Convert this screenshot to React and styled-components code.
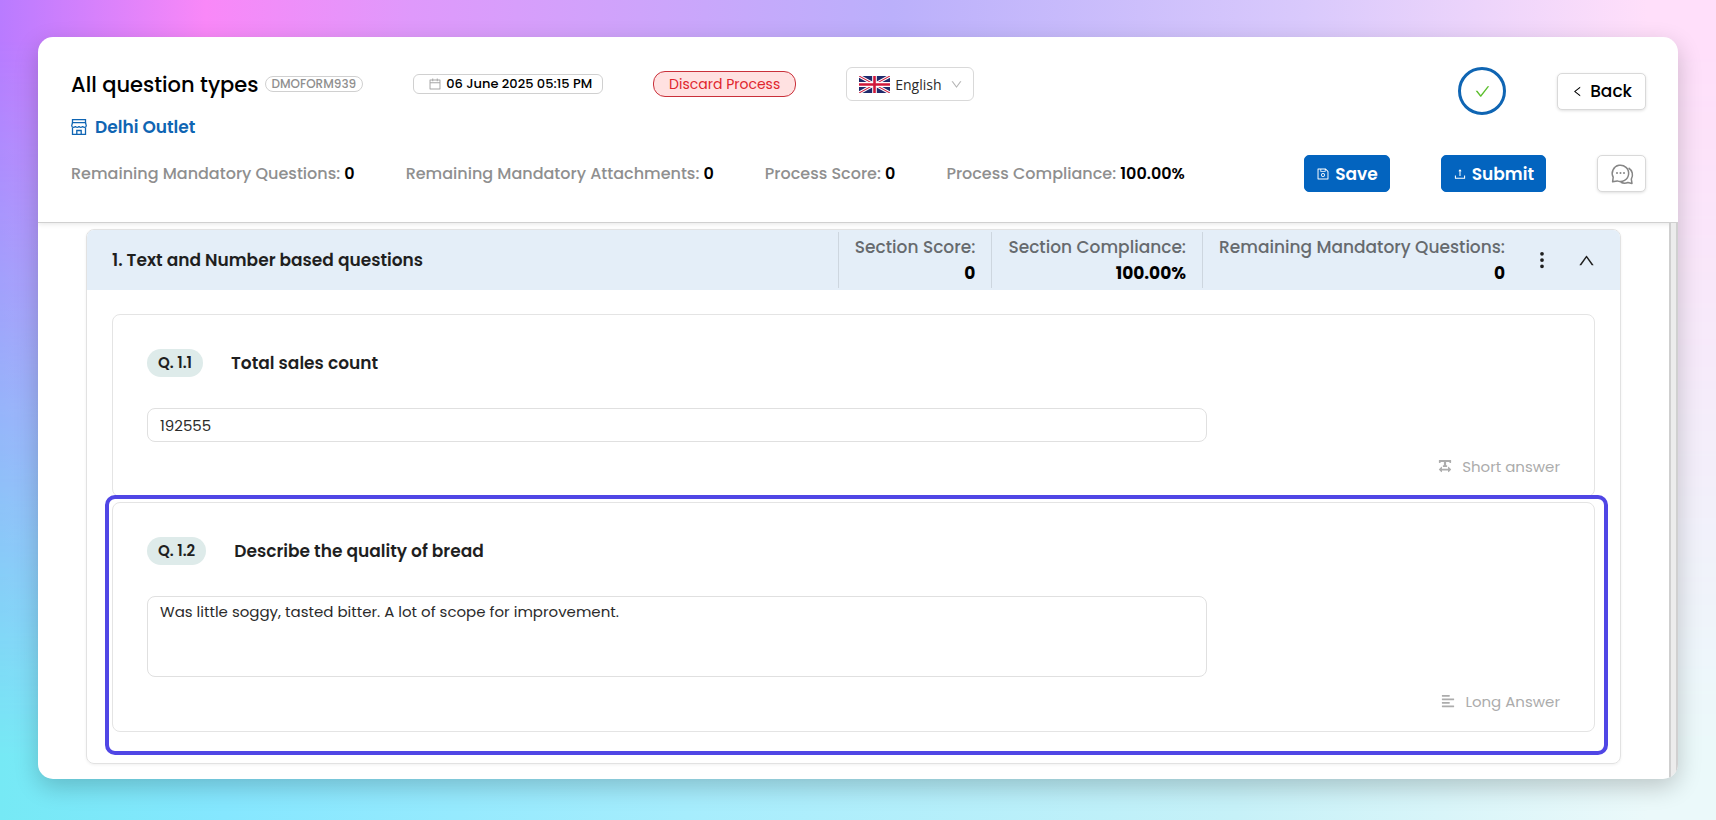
import styled, { createGlobalStyle } from "styled-components";
import {
  AiOutlineCalendar,
  AiOutlineCheck,
  AiOutlineDown,
  AiOutlineLeft,
  AiOutlineSave,
  AiOutlineUp,
  AiOutlineUpload,
} from "react-icons/ai";
import { BsThreeDotsVertical } from "react-icons/bs";
import { FaAlignLeft, FaTextWidth } from "react-icons/fa";

const headerStats = [
  { label: "Remaining Mandatory Questions:", value: "0" },
  { label: "Remaining Mandatory Attachments:", value: "0" },
  { label: "Process Score:", value: "0" },
  { label: "Process Compliance:", value: "100.00%" },
];

const sectionStats = [
  { label: "Section Score:", value: "0" },
  { label: "Section Compliance:", value: "100.00%" },
  { label: "Remaining Mandatory Questions:", value: "0" },
];

function FlagIcon() {
  return (
    <svg width="31" height="17" viewBox="0 0 60 32" preserveAspectRatio="none" aria-hidden="true">
      <rect width="60" height="32" fill="#1f2a6b" />
      <path d="M0 0L60 32M60 0L0 32" stroke="#fff" strokeWidth="6" />
      <path d="M0 0L60 32M60 0L0 32" stroke="#d0183a" strokeWidth="2" />
      <path d="M30 0V32M0 16H60" stroke="#fff" strokeWidth="9" />
      <path d="M30 0V32M0 16H60" stroke="#d0183a" strokeWidth="5" />
    </svg>
  );
}

function ShopIcon() {
  return (
    <svg width="16" height="16" viewBox="0 0 16 16" fill="none" stroke="#0f65b3" strokeWidth="1.3" aria-hidden="true">
      <path d="M1.500 0.700H14.500V3.600H1.500Z" />
      <path d="M1.500 3.600L0.700 6.800C0.700 8.800 4.300 8.800 4.400 7C4.600 8.800 7.900 8.800 8 7C8.100 8.800 11.400 8.800 11.600 7C11.700 8.800 15.300 8.800 15.300 6.800L14.500 3.600" />
      <path d="M1.500 8.500V15.300H14.500V8.500" />
      <path d="M5.800 15.300V11.500H10.200V15.300" />
    </svg>
  );
}

function ChatIcon() {
  return (
    <svg width="24" height="22" viewBox="0 0 24 22" fill="none" stroke="#868686" strokeWidth="1.5" aria-hidden="true">
      <path
        d="M2.600 18.800L3.200 14.200A8.200 8.200 0 1 1 7.200 17.900L2.600 18.800Z"
        strokeLinejoin="round"
      />
      <path d="M18.600 5A8.200 8.200 0 0 1 21.300 16.200L22 20.400L17.900 19.500A9 9 0 0 1 10.800 19.300" strokeLinejoin="round" />
      <g fill="#868686" stroke="none">
        <circle cx="7" cy="10" r="1" />
        <circle cx="10.500" cy="10" r="1" />
        <circle cx="14" cy="10" r="1" />
      </g>
    </svg>
  );
}

function Question({ id, number, title, type, icon, children }) {
  return (
    <QuestionCard>
      <QuestionHead>
        <QuestionNo>{number}</QuestionNo>
        <QuestionTitle htmlFor={id}>{title}</QuestionTitle>
      </QuestionHead>
      {children}
      <AnswerType>
        {icon}
        {type}
      </AnswerType>
    </QuestionCard>
  );
}

function App() {
  return (
    <Page>
      <GlobalStyle />
      <Panel>
        <Header>
          <TopRow>
            <div>
              <TitleRow>
                <TitleGroup>
                  <FormTitle>All question types</FormTitle>
                  <FormCode>DMOFORM939</FormCode>
                </TitleGroup>
                <DateChip>
                  <AiOutlineCalendar size={14} color="#a6a6a6" />
                  06 June 2025 05:15 PM
                </DateChip>
                <DiscardBtn type="button">Discard Process</DiscardBtn>
                <LanguageBox>
                  <FlagIcon />
                  <LanguageSelect aria-label="Language" defaultValue="en">
                    <option value="en">English</option>
                  </LanguageSelect>
                  <AiOutlineDown size={13} color="#b5b5b5" />
                </LanguageBox>
              </TitleRow>
              <Outlet href="#outlet">
                <ShopIcon />
                Delhi Outlet
              </Outlet>
            </div>
            <Actions>
              <Progress>
                <AiOutlineCheck size={17} />
              </Progress>
              <BackBtn type="button">
                <AiOutlineLeft size={13} />
                Back
              </BackBtn>
            </Actions>
          </TopRow>
          <BottomRow>
            <StatList>
              {headerStats.map((stat) => (
                <Stat key={stat.label}>
                  {stat.label} <b>{stat.value}</b>
                </Stat>
              ))}
            </StatList>
            <Actions>
              <PrimaryBtn type="button">
                <AiOutlineSave size={14} />
                Save
              </PrimaryBtn>
              <PrimaryBtn type="button">
                <AiOutlineUpload size={14} />
                Submit
              </PrimaryBtn>
              <ChatBtn type="button" aria-label="Comments">
                <ChatIcon />
              </ChatBtn>
            </Actions>
          </BottomRow>
        </Header>

        <Body>
          <Content>
            <Section>
              <SectionHead>
                <SectionTitle>1. Text and Number based questions</SectionTitle>
                {sectionStats.map((stat) => (
                  <SectionStat key={stat.label}>
                    {stat.label}
                    <b>{stat.value}</b>
                  </SectionStat>
                ))}
                <SectionTools>
                  <IconBtn type="button" aria-label="More options">
                    <BsThreeDotsVertical size={20} />
                  </IconBtn>
                  <IconBtn type="button" aria-label="Collapse section">
                    <AiOutlineUp size={19} />
                  </IconBtn>
                </SectionTools>
              </SectionHead>
              <SectionBody>
                <Question
                  id="q11"
                  number="Q. 1.1"
                  title="Total sales count"
                  type="Short answer"
                  icon={<FaTextWidth size={14} />}
                >
                  <ShortInput id="q11" type="text" defaultValue="192555" />
                </Question>
                <Highlighted>
                  <Question
                    id="q12"
                    number="Q. 1.2"
                    title="Describe the quality of bread"
                    type="Long Answer"
                    icon={<FaAlignLeft size={14} />}
                  >
                    <LongInput
                      id="q12"
                      defaultValue="Was little soggy, tasted bitter. A lot of scope for improvement."
                    />
                  </Question>
                </Highlighted>
              </SectionBody>
            </Section>
          </Content>
          <ScrollTrack />
        </Body>
      </Panel>
    </Page>
  );
}

const GlobalStyle = createGlobalStyle`
  * {
    box-sizing: border-box;
  }
  body {
    margin: 0;
    font-family: Poppins, Inter, "Liberation Sans", sans-serif;
    font-size: 16px;
    color: #1f1f1f;
  }
  button, input, textarea {
    font-family: inherit;
  }
  svg {
    flex-shrink: 0;
  }
`;

/* gradient backdrop */
const Page = styled.main`
  position: relative;
  isolation: isolate;
  display: flex;
  min-height: 100vh;
  padding: 37px 38px 41px;
  background: linear-gradient(
    90deg,
    #b97bff 0%,
    #f988f8 12%,
    #df99fb 24%,
    #bbb0fb 52%,
    #d9c9fc 76%,
    #ffdffa 96%
  );

  &::before {
    content: "";
    position: absolute;
    inset: 0;
    z-index: -1;
    background: linear-gradient(
      90deg,
      #76e9f5 0%,
      #85e7ff 13%,
      #a6edfd 40%,
      #c6f1f8 72%,
      #ebf9fa 96%
    );
    mask-image: linear-gradient(transparent 5%, #000 92%);
  }
`;

const Panel = styled.div`
  flex: 1;
  min-width: 0;
  display: flex;
  flex-direction: column;
  background: #fff;
  border-radius: 15px;
  overflow: hidden;
  box-shadow: 0 8px 24px rgba(0, 0, 0, 0.2);
`;

/* header */
const Header = styled.header`
  padding: 30px 32px 30px 33px;
  border-bottom: 1px solid #d0d0d0;
  box-shadow: 0 1px 5px rgba(0, 0, 0, 0.1);
`;

const TopRow = styled.div`
  display: flex;
  align-items: flex-start;
  justify-content: space-between;
`;

const BottomRow = styled.div`
  display: flex;
  align-items: center;
  justify-content: space-between;
  margin-top: 14px;
`;

const TitleRow = styled.div`
  display: flex;
  align-items: center;
  gap: 50px;
  height: 34px;
`;

const TitleGroup = styled.div`
  display: flex;
  align-items: center;
  gap: 6px;
`;

const FormTitle = styled.h1`
  margin: 0;
  font-size: 21px;
  font-weight: 500;
  color: #000;
`;

const FormCode = styled.span`
  padding: 0 6px;
  border: 1px solid #d0d0d0;
  border-radius: 8px;
  font-size: 12px;
  font-weight: 500;
  line-height: 14px;
  color: #8f8f8f;
`;

const DateChip = styled.span`
  display: flex;
  align-items: center;
  gap: 4px;
  padding: 0 10px 0 14px;
  border: 1px solid #d0d0d0;
  border-radius: 6px;
  font-size: 13px;
  font-weight: 500;
  line-height: 18px;
  color: #000;
`;

const DiscardBtn = styled.button`
  height: 26px;
  padding: 0 15px;
  border: 1px solid #c9303a;
  border-radius: 12px;
  background: #ffe1e1;
  font-size: 14px;
  color: #e0262d;
`;

const LanguageBox = styled.div`
  display: flex;
  align-items: center;
  gap: 5px;
  height: 34px;
  padding: 0 10px 0 12px;
  border: 1px solid #d9d9d9;
  border-radius: 6px;
`;

const LanguageSelect = styled.select`
  appearance: none;
  width: 50px;
  padding: 0;
  border: 0;
  background: transparent;
  font-family: "Open Sans", "Noto Sans", sans-serif;
  font-size: 14px;
  color: #2b2b2b;
`;

const Outlet = styled.a`
  display: flex;
  align-items: center;
  gap: 8px;
  width: fit-content;
  height: 28px;
  margin-top: 12px;
  font-size: 17px;
  font-weight: 600;
  color: #0f65b3;
  text-decoration: none;
`;

const Actions = styled.div`
  display: flex;
  align-items: center;
  gap: 51px;
`;

const Progress = styled.div`
  display: grid;
  place-items: center;
  width: 48px;
  height: 48px;
  border: 3px solid #0f65b3;
  border-radius: 50%;
  color: #5dbf2e;
`;

const Button = styled.button`
  display: flex;
  align-items: center;
  justify-content: center;
  height: 37px;
  border: 1px solid #d9d9d9;
  border-radius: 5px;
  background: #fff;
  font-size: 17px;
  font-weight: 500;
  color: #000;
`;

const BackBtn = styled(Button)`
  gap: 6px;
  padding: 0 13px;
  box-shadow: 0 1px 3px rgba(0, 0, 0, 0.12);
`;

const PrimaryBtn = styled(Button)`
  gap: 5px;
  padding: 0 11px;
  border-color: #0364bf;
  background: #0364bf;
  font-weight: 600;
  color: #fff;
`;

const ChatBtn = styled(Button)`
  width: 49px;
  padding: 0;
  box-shadow: 0 1px 3px rgba(0, 0, 0, 0.12);
`;

const StatList = styled.div`
  display: flex;
  gap: 51px;
`;

const Stat = styled.span`
  font-size: 16px;
  font-weight: 500;
  color: #8f8f8f;

  b {
    font-weight: 600;
    color: #000;
  }
`;

/* scrolling part below the header */
const Body = styled.div`
  flex: 1;
  display: flex;
`;

const Content = styled.div`
  flex: 1;
  min-width: 0;
  padding: 6px 48px 15px;
`;

const ScrollTrack = styled.div`
  width: 9px;
  border-left: 2px solid #cfcfcf;
  border-right: 2px solid #d0d0d0;
  background: #ececec;
`;

const Section = styled.section`
  border: 1px solid #e2e2e2;
  border-radius: 8px;
  box-shadow: 0 1px 3px rgba(0, 0, 0, 0.06);
`;

const SectionHead = styled.div`
  display: flex;
  align-items: center;
  height: 60px;
  padding-left: 25px;
  border-radius: 7px 7px 0 0;
  background: #e4eef8;
`;

const SectionTitle = styled.h2`
  flex: 1;
  margin: 0;
  font-size: 17px;
  font-weight: 600;
`;

const SectionStat = styled.div`
  display: flex;
  flex-direction: column;
  align-items: flex-end;
  padding: 2px 16px;
  border-left: 1px solid #cdd6df;
  font-size: 17px;
  font-weight: 500;
  line-height: 26px;
  color: #666a6e;

  b {
    font-weight: 700;
    color: #000;
  }
`;

const SectionTools = styled.div`
  display: flex;
  align-items: center;
  gap: 25px;
  padding: 0 24px 0 11px;
`;

const IconBtn = styled.button`
  display: flex;
  padding: 0;
  border: 0;
  background: none;
  color: #1f1f1f;
`;

const SectionBody = styled.div`
  display: flex;
  flex-direction: column;
  gap: 5px;
  padding: 24px 25px 31px;
`;

/* question card */
const QuestionCard = styled.article`
  display: flex;
  flex-direction: column;
  padding: 34px 34px 18px;
  border: 1px solid #e4e4e4;
  border-radius: 8px;
`;

/* ring drawn over the active question */
const Highlighted = styled.div`
  position: relative;

  &::after {
    content: "";
    position: absolute;
    inset: -7px -13px -23px -7px;
    border: 4px solid #5046e5;
    border-radius: 10px;
    pointer-events: none;
  }
`;

const QuestionHead = styled.div`
  display: flex;
  align-items: center;
  gap: 28px;
`;

const QuestionNo = styled.span`
  padding: 0 11px;
  border-radius: 14px;
  background: #deebea;
  font-size: 15px;
  font-weight: 600;
  line-height: 28px;
`;

const QuestionTitle = styled.label`
  font-size: 17px;
  font-weight: 600;
`;

const ShortInput = styled.input`
  width: 75%;
  height: 34px;
  margin-top: 31px;
  padding: 0 12px;
  border: 1px solid #e0e0e0;
  border-radius: 8px;
  font-size: 15px;
  color: #2b2b2b;
`;

const LongInput = styled.textarea`
  width: 75%;
  height: 81px;
  margin-top: 31px;
  padding: 4px 12px;
  border: 1px solid #e0e0e0;
  border-radius: 8px;
  font-size: 15px;
  line-height: 22px;
  color: #2b2b2b;
  resize: none;
`;

const AnswerType = styled.div`
  display: flex;
  align-items: center;
  justify-content: flex-end;
  gap: 10px;
  height: 24px;
  margin-top: 12px;
  font-size: 15px;
  color: #acacac;
`;

export default App;
